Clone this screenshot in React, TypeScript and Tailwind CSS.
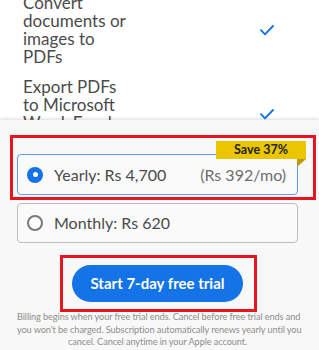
import React from "react";

function Check() {
  return (
    <svg width="14" height="11" viewBox="0 0 14 11" fill="none">
      <path d="M1 5.2 L5 9.3 L13 1" stroke="#1473e6" strokeWidth="1.9" strokeLinecap="round" strokeLinejoin="round" />
    </svg>
  );
}

function Feature({ lines }: { lines: string[] }) {
  return (
    <div className="flex items-center">
      <div className="w-[237px] text-[17px] leading-[18px] text-[#4b4b4b]">
        {lines.map((l, i) => (
          <div key={i}>{l}</div>
        ))}
      </div>
      <Check />
    </div>
  );
}

export default function App() {
  return (
    <div className="w-[319px] h-[350px] overflow-hidden bg-white" style={{ fontFamily: "Lato, 'Liberation Sans', sans-serif" }}>
      <div className="h-[120px] overflow-hidden">
        <div className="-mt-[6px] pl-[23px] flex flex-col gap-[12px]">
          <Feature lines={["Convert", "documents or", "images to", "PDFs"]} />
          <Feature lines={["Export PDFs", "to Microsoft", "Word, Excel", "and more"]} />
        </div>
      </div>
      <div className="relative h-[230px] bg-[#f8f8f8] shadow-[0_-1px_3px_rgba(0,0,0,0.15)]">
        <div className="ml-[17px] w-[281px] pt-[34px] flex flex-col">
          <div className="relative h-[41px] rounded-[4px] border border-[#5d9cf2] bg-[#fafafa] flex items-center pl-[9px] pr-[11px]">
            <span className="w-[16px] h-[16px] rounded-full bg-[#1473e6] flex items-center justify-center">
              <span className="w-[5px] h-[5px] rounded-full bg-white" />
            </span>
            <span className="ml-[11px] text-[16px] text-[#4b4b4b]">Yearly: Rs 4,700</span>
            <span className="ml-auto text-[16px] text-[#6e6e6e]">(Rs 392/mo)</span>
            <div className="absolute right-[-9px] top-[-14px] w-[90px] h-[18px] bg-[#eac600] flex items-center justify-center text-[12.5px] font-bold text-[#1f1f1f]">
              Save 37%
            </div>
            <svg className="absolute right-[-9px] top-[4px]" width="9" height="8" viewBox="0 0 9 8">
              <path d="M0 0 L9 0 L0 8 Z" fill="#b89b10" />
            </svg>
          </div>
          <div className="mt-[8px] h-[40px] rounded-[4px] border border-[#bdbdbd] bg-[#fafafa] flex items-center pl-[9px]">
            <span className="w-[16px] h-[16px] rounded-full border-2 border-[#7a7a7a] bg-white" />
            <span className="ml-[11px] text-[16px] text-[#4b4b4b]">Monthly: Rs 620</span>
          </div>
          <div className="mt-[22px] flex justify-center">
            <button className="w-[171px] h-[37px] rounded-full bg-[#1473e6] text-white font-bold text-[15px]">
              Start 7-day free trial
            </button>
          </div>
          <div className="mt-[9px] text-center text-[9.2px] leading-[12.5px] tracking-[-0.1px] text-[#8e8e8e] whitespace-nowrap">
            <div>Billing begins when your free trial ends. Cancel before free trial ends and</div>
            <div>you won't be charged. Subscription automatically renews yearly until you</div>
            <div>cancel. Cancel anytime in your Apple account.</div>
          </div>
        </div>
        <div className="absolute left-[10px] top-[15px] w-[306px] h-[65px] border-[3px] border-[#e8141e] pointer-events-none" />
        <div className="absolute left-[60px] top-[135px] w-[197px] h-[57px] border-[3px] border-[#e8141e] pointer-events-none" />
      </div>
    </div>
  );
}
